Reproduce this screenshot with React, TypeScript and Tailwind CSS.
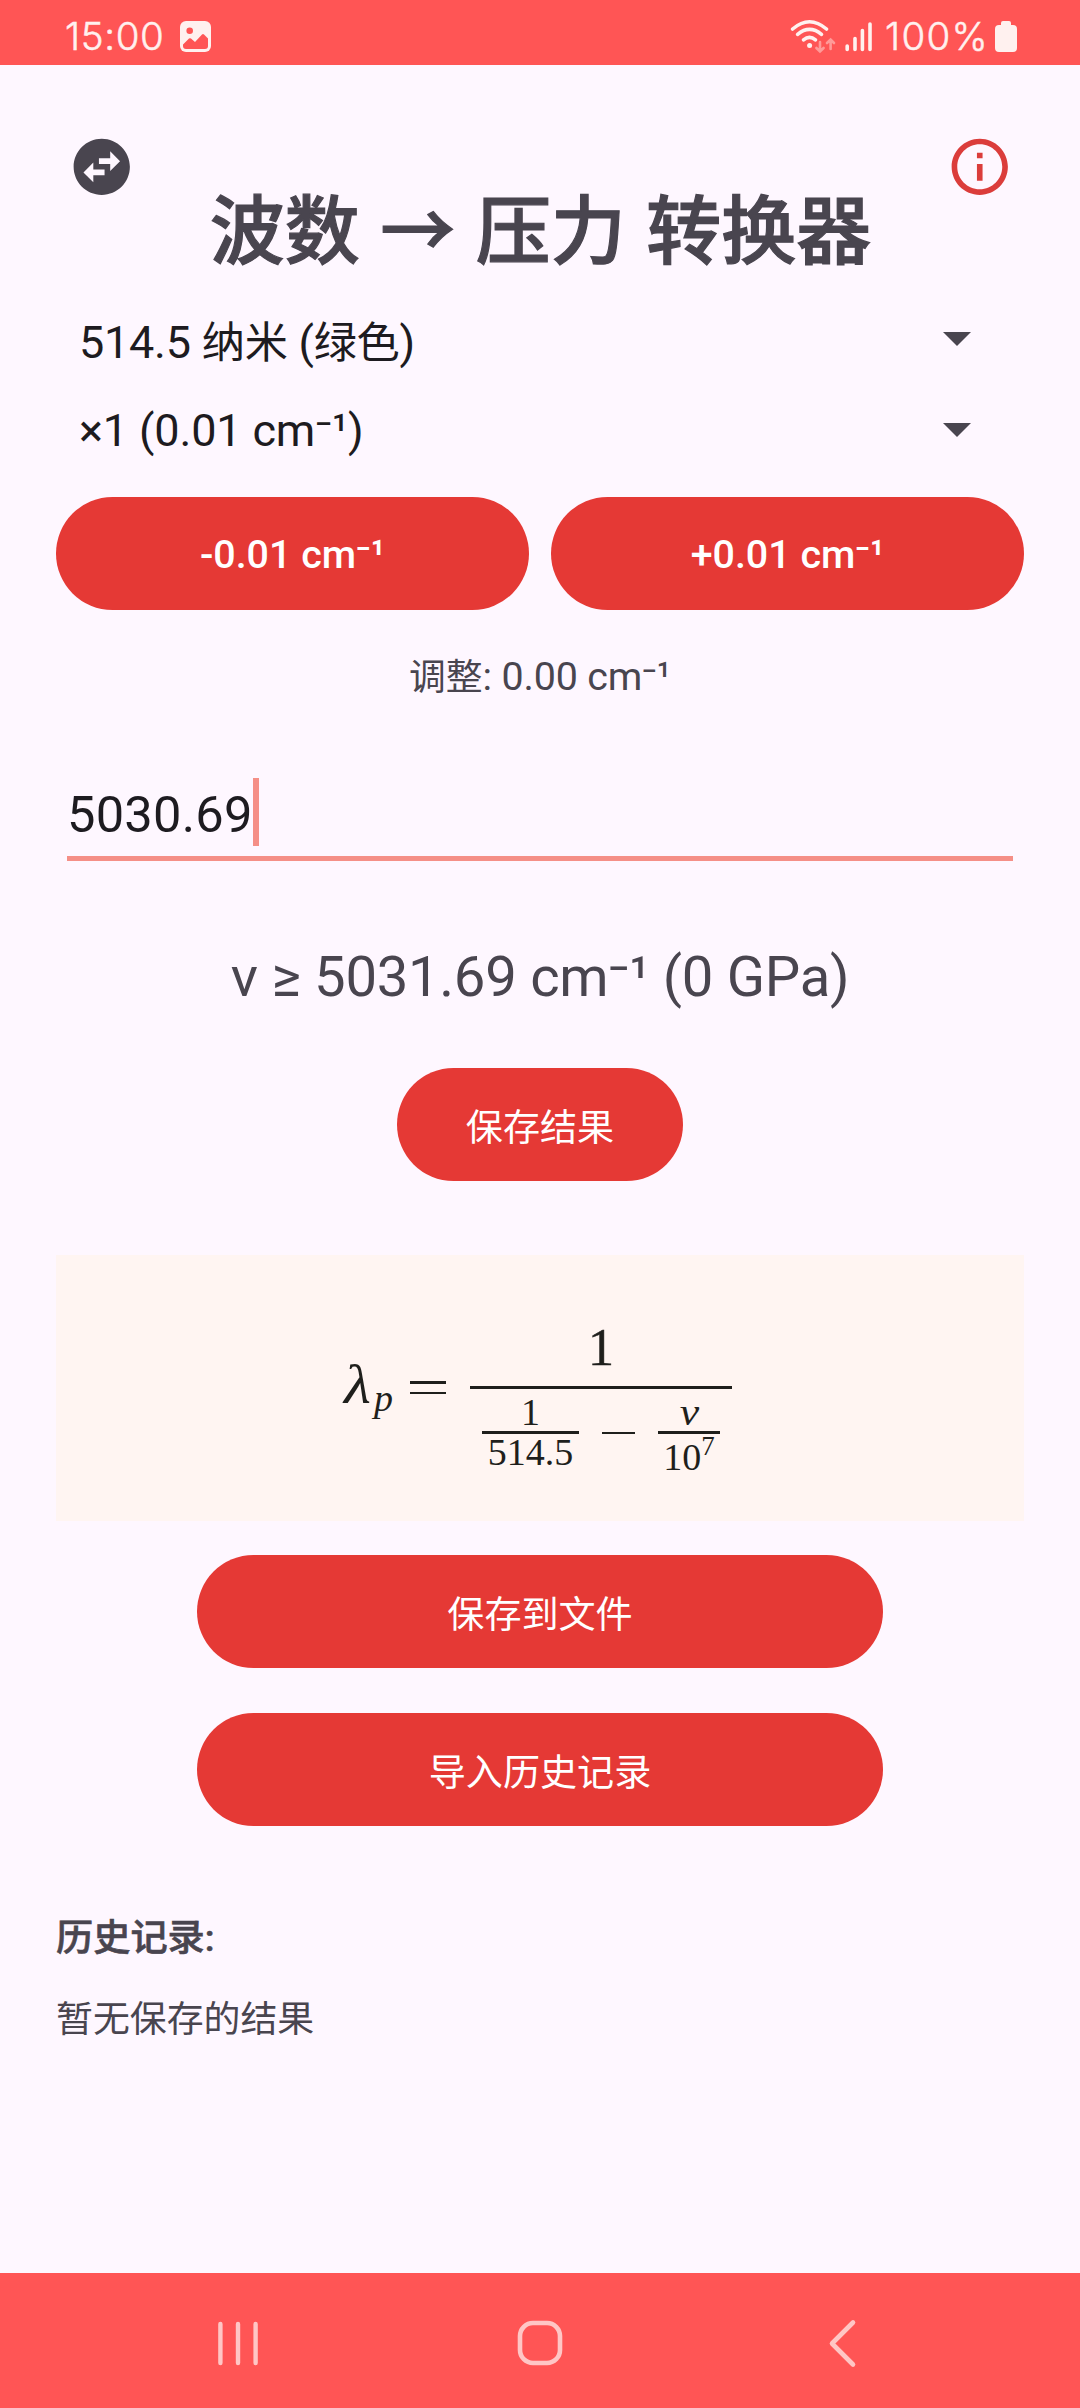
import type { ReactNode } from "react";
import { MdInfoOutline, MdSwapHorizontalCircle } from "react-icons/md";

const latin = "font-['Roboto','Noto_Sans_CJK_SC',sans-serif]";

function Cjk({ children, className = "text-[43.2px]" }: { children: ReactNode; className?: string }) {
  return <span className={`font-['Noto_Sans_CJK_SC',sans-serif] leading-none ${className}`}>{children}</span>;
}

function StatusBar() {
  return (
    <div className="flex h-[65px] items-center bg-[#ff5555] pl-[65px] pr-[63px] pt-[7px] text-[#fff1ef]">
      <span className="w-[115px] font-['Inter',sans-serif] text-[38.5px] font-light leading-[44px] tracking-[0.6px] [-webkit-text-stroke:0.5px_#fff1ef]">15:00</span>
      <svg className="h-[31px] w-[31px]" viewBox="0 0 31 31">
        <rect width="31" height="31" rx="6" fill="#fff1ef" />
        <circle cx="9.7" cy="9.7" r="3.3" fill="#ff5555" />
        <path d="M3 23.5 L9 17.6 Q10 16.8 11 17.6 L15 21 L22 13.4 Q23 12.6 24 13.4 L28 17.5 V25 Q28 28 25 28 H6 Q3 28 3 25 Z" fill="#ff5555" />
      </svg>
      <div className="flex-1" />
      <svg className="h-[36px] w-[84px]" viewBox="790 18 84 36" fill="none" strokeLinecap="round">
        <g stroke="#fff1ef" strokeWidth="3.6">
          <path d="M792.6 29 Q809.500 14.500 826.500 29" />
          <path d="M797.600 34.300 Q809.500 24.500 821.500 34.300" />
          <path d="M803.500 39.800 Q809.500 34.800 815.500 39.800" />
          <path d="M847.200 46V49.500M855 38.500V49.500M862.400 30.500V49.500M870 24V49.500" />
        </g>
        <circle cx="809.6" cy="45.500" r="2.500" fill="#fff1ef" />
        <path d="M820 42V51M816.400 48L820 51.500L823.600 48M830.600 49V40M827 43L830.600 39.500L834 43" stroke="#ff9a98" strokeWidth="2.600" />
      </svg>
      <span className="ml-[11px] w-[110px] whitespace-nowrap font-['Inter',sans-serif] text-[38.5px] font-light leading-[44px] tracking-[1.3px] [-webkit-text-stroke:0.5px_#fff1ef]">100%</span>
      <svg className="h-[31px] w-[22px]" viewBox="0 0 22 31" fill="#fff1ef">
        <path d="M6 4 V2 Q6 0 8 0 H14 Q16 0 16 2 V4 H18 Q22 4 22 8 V27 Q22 31 18 31 H4 Q0 31 0 27 V8 Q0 4 4 4 Z" />
      </svg>
    </div>
  );
}

function SelectRow({ children, className }: { children: ReactNode; className: string }) {
  return (
    <div className="flex h-[91px] items-start justify-between pl-[23px] pr-[53px] text-[45px] text-[#1d1b20]">
      <span className={`whitespace-nowrap ${className}`}>{children}</span>
      <svg className="mt-[17px] h-[14px] w-[28px]" viewBox="0 0 28 14" fill="#49454f">
        <path d="M0 0H28L14 14Z" />
      </svg>
    </div>
  );
}

function Pill({ children, className }: { children: ReactNode; className: string }) {
  return (
    <button className={`flex h-[113px] items-center justify-center rounded-full bg-[#e53935] pt-[2px] text-white ${className}`}>
      {children}
    </button>
  );
}

const serif = "font-['Liberation_Serif',serif]";

function Formula() {
  return (
    <div className={`mt-[74px] flex h-[266px] items-start bg-[#fff5f2] pl-[288px] text-[#1f1f1c] ${serif}`}>
      <div className="flex w-[66px] items-start pt-[100px]">
        <span className="w-[29px] origin-left scale-x-115 text-[54px] italic leading-[60px]">λ</span>
        <span className="pl-[1px] pt-[23px] text-[38px] italic leading-[40px]">p</span>
      </div>
      <div className="mt-[126px] flex h-[13px] w-[36px] flex-col justify-between">
        <div className="h-[2.500px] bg-[#1f1f1c]" />
        <div className="h-[2.500px] bg-[#1f1f1c]" />
      </div>
      <div className="ml-[24px] flex w-[262px] flex-col">
        <div className="flex h-[131px] justify-center pt-[65px] text-[52px] leading-[56px] [-webkit-text-stroke:0.5px_#1f1f1c]">1</div>
        <div className="h-[3px] bg-[#1f1f1c]" />
        <div className="flex items-start justify-between px-[12px] text-[38px] leading-[40px]">
          <div className="flex w-[97px] flex-col items-center">
            <div className="flex h-[42px] items-end"><span className="leading-[38px]">1</span></div>
            <div className="h-[3px] w-full bg-[#1f1f1c]" />
            <span className="leading-[37px]">514.5</span>
          </div>
          <div className="mt-[43px] h-[2px] w-[33px] bg-[#1f1f1c]" />
          <div className="flex w-[62px] flex-col items-center">
            <div className="flex h-[42px] items-end"><span className="scale-x-115 italic leading-[38px]">ν</span></div>
            <div className="h-[3px] w-full bg-[#1f1f1c]" />
            <div className="flex">
              <span className="pt-[3px]">10</span>
              <span className="text-[27px] leading-[25px]">7</span>
            </div>
          </div>
        </div>
      </div>
    </div>
  );
}

function NavBar() {
  return (
    <div className="flex h-[135px] items-center justify-between bg-[#ff5555] px-[214px] pt-[5px]">
      <svg className="h-[52px] w-[48px]" viewBox="0 0 48 52" stroke="#ffc6c5" strokeWidth="4.400" strokeLinecap="round">
        <path d="M6.400 7V46M24 7V46M41.600 7V46" />
      </svg>
      <svg className="h-[52px] w-[52px]" viewBox="0 0 52 52" fill="none" stroke="#ffc6c5" strokeWidth="4.600">
        <rect x="6" y="6" width="40" height="40" rx="13" />
      </svg>
      <svg className="h-[52px] w-[48px]" viewBox="-8 0 48 52" fill="none" stroke="#ffc6c5" strokeWidth="4.600" strokeLinecap="round" strokeLinejoin="round">
        <path d="M27 5.500L6 26.500L27 47.500" />
      </svg>
    </div>
  );
}

export default function App() {
  return (
    <div className={`flex h-[2408px] w-[1080px] flex-col overflow-hidden bg-[#fef7ff] text-[#49454f] ${latin}`}>
      <StatusBar />
      <main className="flex flex-1 flex-col px-[56px]">
        <header className="flex h-[250px] items-start justify-between pl-[12px] pr-[11px] pt-[68px]">
          <MdSwapHorizontalCircle className="size-[67.5px] text-[#49454f]" />
          <h1 className="whitespace-nowrap pt-[48px] font-['Noto_Sans_CJK_SC',sans-serif] text-[75px] font-medium leading-[90px] [-webkit-text-stroke:1.2px_#49454f] [word-spacing:3.600px]">
            波数 → 压力 转换器
          </h1>
          <MdInfoOutline className="size-[67.5px] text-[#db3d3b]" />
        </header>
        <SelectRow className="leading-[56px] tracking-[-0.25px]">514.5 <Cjk>纳米</Cjk> (<Cjk>绿色</Cjk>)</SelectRow>
        <SelectRow className="leading-[50px] tracking-[-0.15px]">×1 (0.01 cm⁻¹)</SelectRow>
        <div className="flex gap-[22px] text-[39.4px] font-medium tracking-[0px]">
          <Pill className="flex-1">-0.01 cm⁻¹</Pill>
          <Pill className="flex-1">+0.01 cm⁻¹</Pill>
        </div>
        <p className="mt-[40px] h-[54px] text-center text-[39.4px] leading-[54px] tracking-[-0.15px]">
          <Cjk className="text-[36.8px]">调整</Cjk>: 0.00 cm⁻¹
        </p>
        <div className="mx-[11px] mt-[72px] flex h-[85px] items-start border-b-[5.500px] border-[#f58f87]">
          <span className="text-[50.6px] leading-[78px] tracking-[0.25px] text-[#1d1b20]">5030.69</span>
          <div className="mt-[2px] h-[68px] w-[6px] bg-[#f58f87]" />
        </div>
        <p className="mt-[81px] h-[70px] text-center text-[56.25px] leading-[70px] tracking-[-0.3px]">v ≥ 5031.69 cm⁻¹ (0 GPa)</p>
        <Pill className="mt-[56px] w-[286px] self-center"><Cjk className="text-[37.1px]">保存结果</Cjk></Pill>
        <Formula />
        <Pill className="mt-[34px] w-[686px] self-center"><Cjk className="text-[37.1px]">保存到文件</Cjk></Pill>
        <Pill className="mt-[45px] w-[686px] self-center"><Cjk className="text-[37.1px]">导入历史记录</Cjk></Pill>
        <p className="mt-[85px] h-[54px] text-[37.2px] font-medium leading-[54px] [-webkit-text-stroke:0.6px_#49454f]">历史记录:</p>
        <p className="mt-[28px] h-[54px] text-[36.9px] leading-[54px]">暂无保存的结果</p>
      </main>
      <NavBar />
    </div>
  );
}
